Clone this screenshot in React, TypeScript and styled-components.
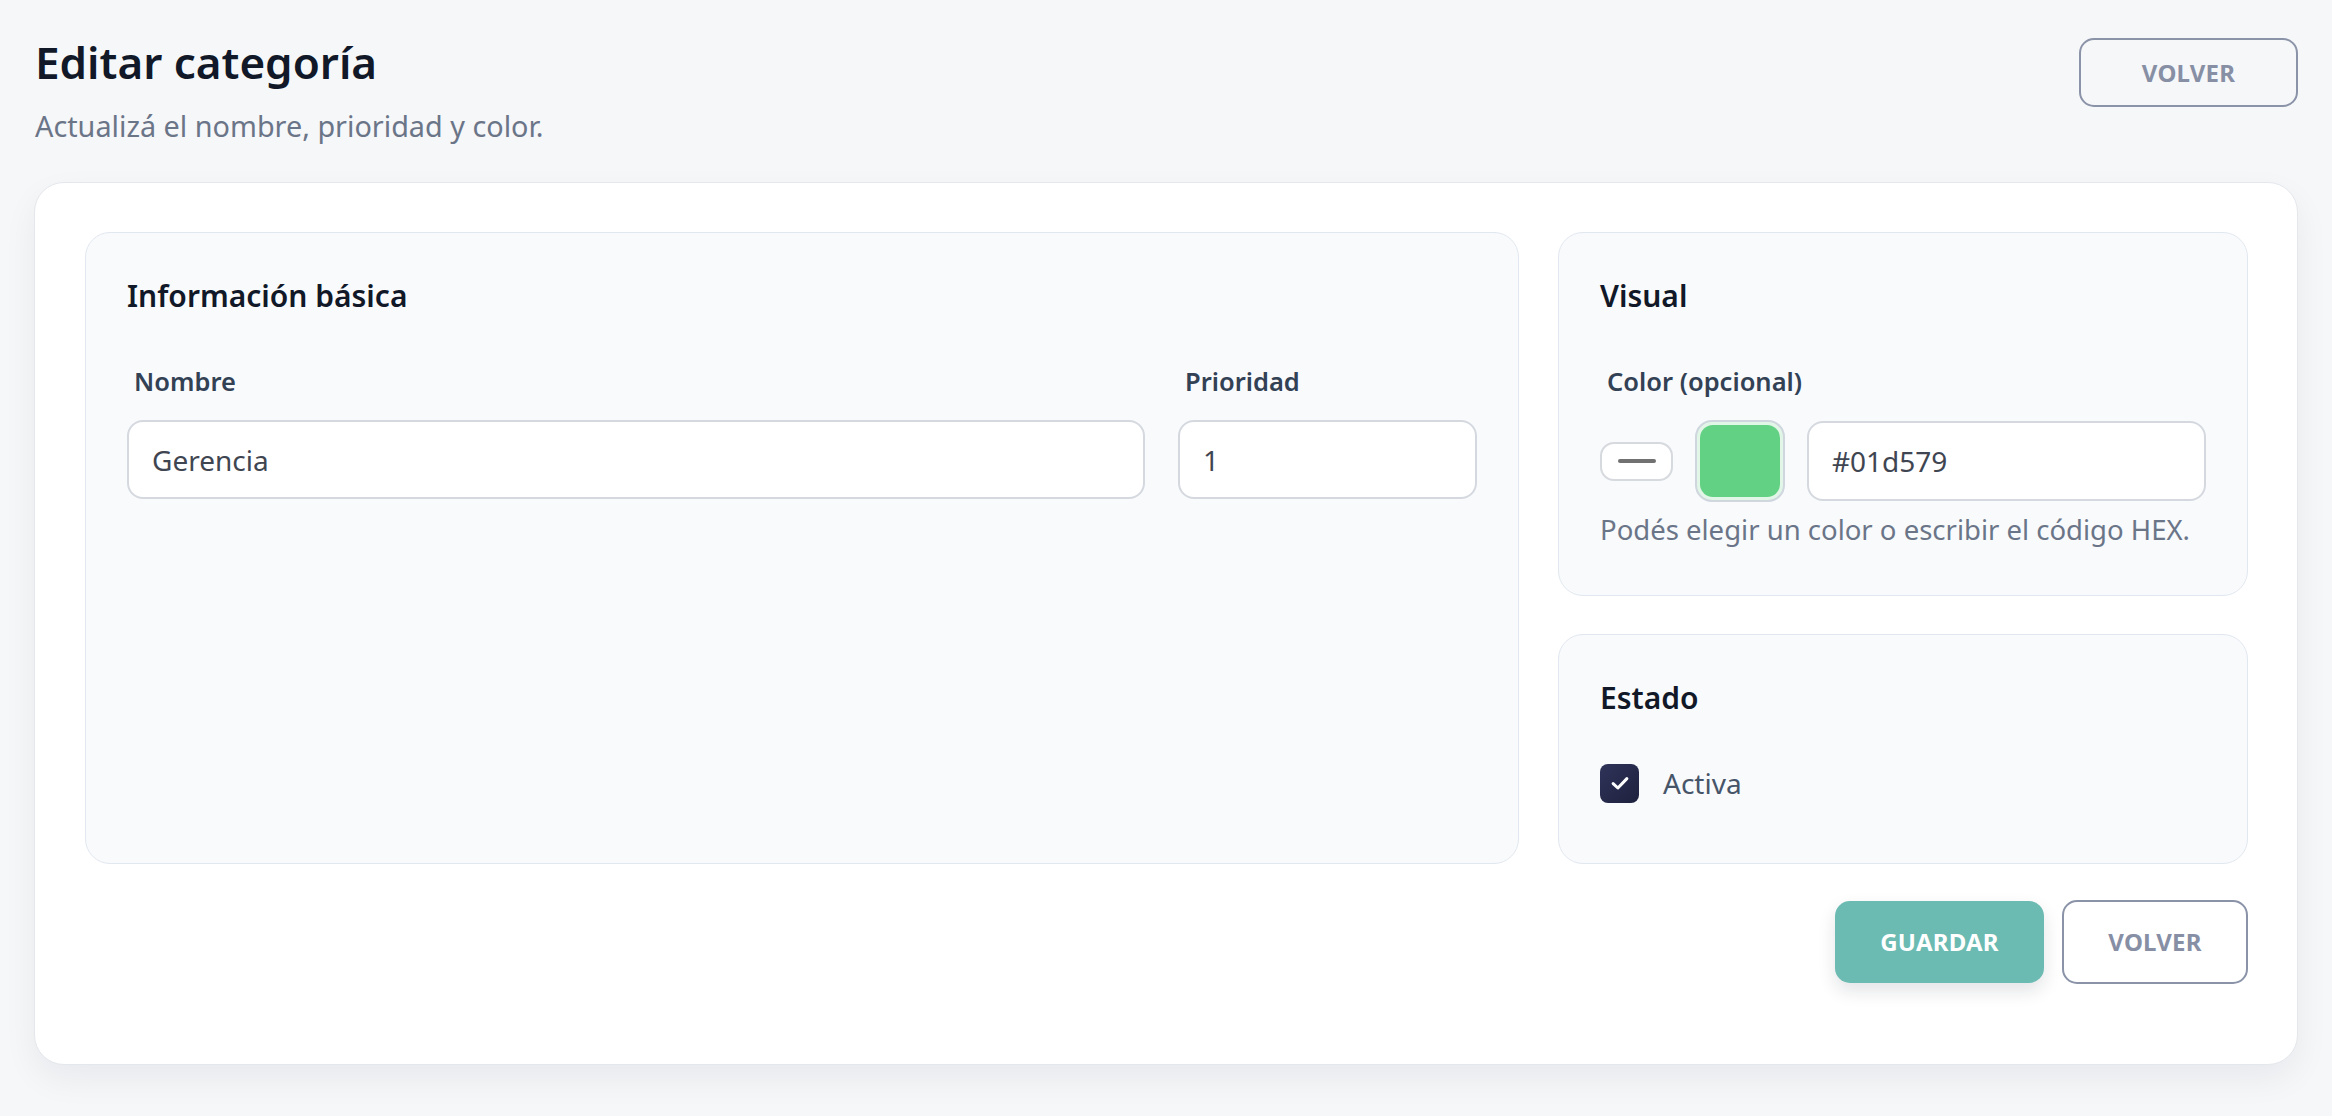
import React, { useState } from "react";
import styled, { createGlobalStyle } from "styled-components";

const GlobalStyle = createGlobalStyle`
  * {
    box-sizing: border-box;
  }

  body {
    margin: 0;
    background: #f6f7f9;
    font-family: "Noto Sans", "Open Sans", sans-serif;
    color: #0f172a;
  }
`;

const Page = styled.div`
  min-height: 1116px;
  padding: 37px 34px 50px 34px;
`;

const Header = styled.header`
  display: flex;
  justify-content: space-between;
  align-items: flex-start;
  margin-bottom: 35px;
  padding-left: 1px;
`;

const TitleBlock = styled.div`
  display: flex;
  flex-direction: column;
`;

const Title = styled.h1`
  margin: 0;
  font-size: 44px;
  line-height: 50px;
  font-weight: 600;
  color: #111827;
`;

const Subtitle = styled.p`
  margin: 18px 0 0;
  font-size: 28.8px;
  line-height: 42px;
  color: #6b7588;
`;

const OutlineButton = styled.button<{ $tall?: boolean }>`
  height: ${({ $tall }) => ($tall ? "84px" : "69px")};
  width: ${({ $tall }) => ($tall ? "186px" : "219px")};
  margin-top: ${({ $tall }) => ($tall ? "0" : "1px")};
  border: 2px solid #8a93a8;
  border-radius: 15px;
  background: ${({ $tall }) => ($tall ? "#ffffff" : "transparent")};
  color: #878fa5;
  font-family: inherit;
  font-size: 24px;
  font-weight: 700;
  letter-spacing: 0.2px;
  text-transform: uppercase;
  cursor: pointer;
`;

const SaveButton = styled.button`
  height: 82px;
  width: 209px;
  border: none;
  border-radius: 15px;
  background: #6bbbb3;
  color: #ffffff;
  font-family: inherit;
  font-size: 24px;
  font-weight: 700;
  letter-spacing: 0.2px;
  text-transform: uppercase;
  box-shadow: 0 8px 18px rgba(15, 23, 42, 0.12);
  cursor: pointer;
`;

const Card = styled.section`
  background: #ffffff;
  border: 1.5px solid #e4e7eb;
  border-radius: 30px;
  padding: 49px 49px 80px 50px;
  box-shadow: 0 14px 34px rgba(15, 23, 42, 0.06);
`;

const FormGrid = styled.div`
  display: grid;
  grid-template-columns: 1fr 690px;
  gap: 39px;
`;

const Column = styled.div`
  display: flex;
  flex-direction: column;
  gap: 38px;
`;

const Panel = styled.div<{ $bottom?: number }>`
  background: #f8fafc;
  border: 1.5px solid #e2e8f0;
  border-radius: 25px;
  padding: 42px 41px ${({ $bottom }) => $bottom ?? 45}px;
`;

const PanelTitle = styled.h2<{ $gap?: number }>`
  margin: 0 0 ${({ $gap }) => $gap ?? 46}px;
  font-size: 30px;
  line-height: 42px;
  font-weight: 600;
  color: #111827;
`;

const FieldRow = styled.div`
  display: grid;
  grid-template-columns: 1fr 299px;
  gap: 33px;
`;

const Field = styled.label`
  display: flex;
  flex-direction: column;
  gap: 21px;
`;

const FieldLabel = styled.span`
  padding-left: 7px;
  font-size: 25.5px;
  line-height: 36px;
  font-weight: 600;
  color: #334155;
`;

const TextInput = styled.input`
  width: 100%;
  height: 79px;
  padding: 0 23px;
  border: 2px solid #d5d9df;
  border-radius: 16px;
  background: #ffffff;
  font-family: inherit;
  font-size: 28px;
  color: #3f4651;
  outline: none;
`;

const ColorRow = styled.div`
  display: flex;
  align-items: center;
  gap: 22px;
`;

const ClearPill = styled.button`
  flex: none;
  display: flex;
  align-items: center;
  justify-content: center;
  width: 73px;
  height: 39px;
  padding: 0;
  border: 2px solid #d6d9dd;
  border-radius: 14px;
  background: #ffffff;
  cursor: pointer;

  span {
    display: block;
    width: 38px;
    height: 4px;
    border-radius: 2px;
    background: #717171;
  }
`;

const Swatch = styled.div<{ $color: string }>`
  flex: none;
  width: 90px;
  height: 82px;
  padding: 3px;
  border: 2px solid #cfd6de;
  border-radius: 17px;
  background: #e2f6e7;

  div {
    width: 100%;
    height: 100%;
    border-radius: 13px;
    background: ${({ $color }) => $color};
  }
`;

const HexInput = styled(TextInput)`
  flex: 1;
  height: 80px;
`;

const Helper = styled.p`
  margin: 8px 0 0;
  font-size: 27.5px;
  line-height: 40px;
  color: #6b7588;
`;

const CheckRow = styled.label`
  display: flex;
  align-items: center;
  gap: 24px;
  height: 40px;
  cursor: pointer;
`;

const CheckBox = styled.span<{ $checked: boolean }>`
  flex: none;
  display: flex;
  align-items: center;
  justify-content: center;
  width: 39px;
  height: 39px;
  border-radius: 8px;
  background: ${({ $checked }) =>
    $checked ? "linear-gradient(135deg, #2f3359, #1e213d)" : "#ffffff"};
  border: ${({ $checked }) => ($checked ? "none" : "2px solid #cbd5e1")};
`;

const CheckText = styled.span`
  font-size: 28px;
  line-height: 40px;
  color: #475569;
`;

const Actions = styled.div`
  display: flex;
  justify-content: flex-end;
  align-items: center;
  gap: 18px;
  margin-top: 36px;
`;

const App: React.FC = () => {
  const [name, setName] = useState("Gerencia");
  const [priority, setPriority] = useState("1");
  const [hex, setHex] = useState("#01d579");
  const [active, setActive] = useState(true);

  return (
    <>
      <GlobalStyle />
      <Page>
        <Header>
          <TitleBlock>
            <Title>Editar categoría</Title>
            <Subtitle>Actualizá el nombre, prioridad y color.</Subtitle>
          </TitleBlock>
          <OutlineButton>Volver</OutlineButton>
        </Header>

        <Card>
          <FormGrid>
            <Panel>
              <PanelTitle>Información básica</PanelTitle>
              <FieldRow>
                <Field>
                  <FieldLabel>Nombre</FieldLabel>
                  <TextInput value={name} onChange={(e) => setName(e.target.value)} />
                </Field>
                <Field>
                  <FieldLabel>Prioridad</FieldLabel>
                  <TextInput value={priority} onChange={(e) => setPriority(e.target.value)} />
                </Field>
              </FieldRow>
            </Panel>

            <Column>
              <Panel>
                <PanelTitle>Visual</PanelTitle>
                <Field as="div">
                  <FieldLabel>Color (opcional)</FieldLabel>
                  <ColorRow>
                    <ClearPill type="button" onClick={() => setHex("")}>
                      <span />
                    </ClearPill>
                    <Swatch $color="#62d183">
                      <div />
                    </Swatch>
                    <HexInput value={hex} onChange={(e) => setHex(e.target.value)} />
                  </ColorRow>
                </Field>
                <Helper>Podés elegir un color o escribir el código HEX.</Helper>
              </Panel>

              <Panel $bottom={59.5}>
                <PanelTitle $gap={44}>Estado</PanelTitle>
                <CheckRow onClick={() => setActive(!active)}>
                  <CheckBox $checked={active}>
                    {active && (
                      <svg width="30" height="30" viewBox="0 0 24 24" fill="none">
                        <polyline
                          points="6.5 12.5 10.3 16 17.5 8.5"
                          stroke="#ffffff"
                          strokeWidth="2.4"
                          strokeLinecap="round"
                          strokeLinejoin="round"
                        />
                      </svg>
                    )}
                  </CheckBox>
                  <CheckText>Activa</CheckText>
                </CheckRow>
              </Panel>
            </Column>
          </FormGrid>

          <Actions>
            <SaveButton>Guardar</SaveButton>
            <OutlineButton $tall>Volver</OutlineButton>
          </Actions>
        </Card>
      </Page>
    </>
  );
};

export default App;
